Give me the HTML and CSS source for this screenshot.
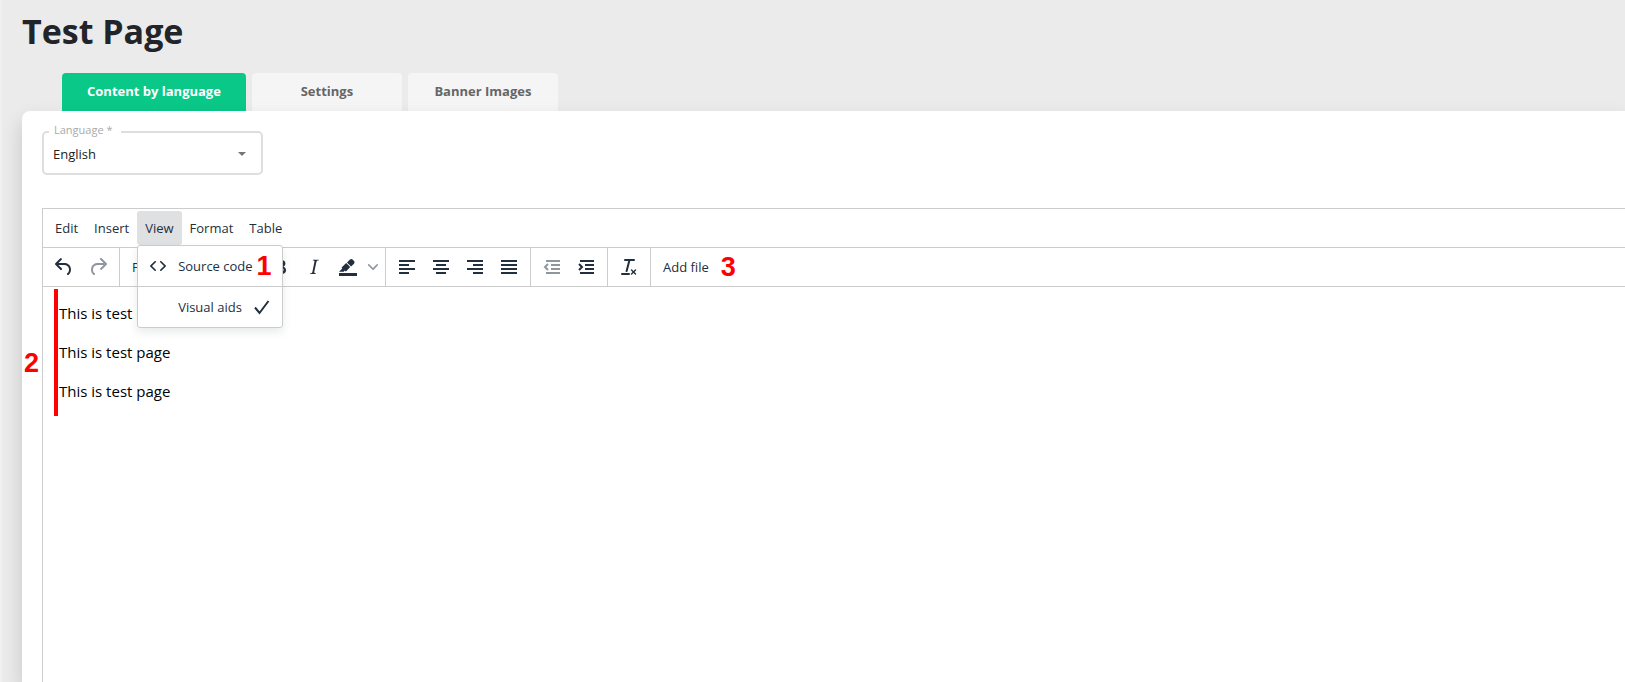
FILE: index.html
```html
<!DOCTYPE html>
<html lang="en">
<head>
    <meta charset="UTF-8">
    <meta name="viewport" content="width=device-width, initial-scale=1.0">
    <title>Test Page</title>
    <link rel="stylesheet" href="styles.css">
</head>
<body>

<h1>Test Page</h1>

<nav class="tabs">
    <button class="tab active">Content by language</button>
    <button class="tab">Settings</button>
    <button class="tab">Banner Images</button>
</nav>

<main class="panel">
    <div class="language-field">
        <label for="language">Language *</label>
        <select id="language">
            <option>English</option>
        </select>
    </div>

    <div class="editor">
        <div class="menubar">
            <button>Edit</button>
            <button>Insert</button>
            <div class="menu-holder">
                <button class="open">View</button>
                <!-- Opened View menu -->
                <div class="menu">
                    <button class="menu-item">
                        <svg viewBox="0 0 24 24"><path d="M9.8 15.7c.3.3.3.8 0 1-.3.4-.9.4-1.2 0l-4.4-4.1a.8.8 0 010-1.2l4.4-4.2c.3-.3.9-.3 1.2 0 .3.3.3.8 0 1.1L6 12l3.8 3.7zM14.2 15.7c-.3.3-.3.8 0 1 .4.4.9.4 1.2 0l4.4-4.1c.3-.3.3-.9 0-1.2l-4.4-4.2a.8.8 0 00-1.2 0c-.3.3-.3.8 0 1.1L18 12l-3.8 3.7z"/></svg>
                        <span>Source code</span>
                        <b class="mark">1</b>
                    </button>
                    <button class="menu-item">
                        <i class="no-icon"></i>
                        <span>Visual aids</span>
                        <svg class="check" viewBox="0 0 24 24"><path d="M5 12.5l4.5 5.5L18.5 6"/></svg>
                    </button>
                </div>
            </div>
            <button>Format</button>
            <button>Table</button>
        </div>

        <div class="toolbar">
            <div class="group">
                <button class="tool" aria-label="Undo"><svg viewBox="0 0 24 24"><path d="M6.4 8H12c3.7 0 6.2 2 6.8 5.1.6 2.7-.4 5.6-2.3 6.8a1 1 0 01-1-1.8c1.1-.6 1.8-2.7 1.4-4.6-.5-2.1-2.1-3.5-4.9-3.5H6.4l3.3 3.3a1 1 0 11-1.4 1.4l-5-5a1 1 0 010-1.4l5-5a1 1 0 011.4 1.4L6.4 8z"/></svg></button>
                <button class="tool" aria-label="Redo" disabled><svg viewBox="0 0 24 24"><path d="M17.6 10H12c-2.8 0-4.4 1.4-4.9 3.5-.4 2 .3 4 1.4 4.6a1 1 0 11-1 1.8c-2-1.2-2.9-4.1-2.3-6.8.6-3 3-5.1 6.8-5.1h5.6l-3.3-3.3a1 1 0 111.4-1.4l5 5a1 1 0 010 1.4l-5 5a1 1 0 01-1.4-1.4l3.3-3.3z"/></svg></button>
            </div>
            <div class="group">
                <button class="format-select">Paragraph</button>
            </div>
            <div class="group">
                <button class="tool" aria-label="Bold"><svg viewBox="0 0 24 24"><path d="M7.8 19c-.3 0-.5 0-.6-.2l-.2-.5V5.7c0-.2 0-.4.2-.5l.6-.2h5c1.5 0 2.7.3 3.5 1 .7.6 1.1 1.4 1.1 2.5a3 3 0 01-.6 1.9c-.4.6-1 1-1.6 1.2.4.1.9.3 1.3.6s.8.7 1 1.2c.4.4.5 1 .5 1.6 0 1.3-.4 2.3-1.3 3-.8.7-2.1 1-3.8 1H7.8zm5-8.3c.6 0 1.2-.1 1.6-.5.4-.3.6-.7.6-1.3 0-1.1-.8-1.7-2.3-1.7H9.3v3.5h3.4zm.5 6c.7 0 1.3-.1 1.7-.4.4-.4.6-.9.6-1.5s-.2-1-.7-1.4c-.4-.3-1-.4-2-.4H9.4v3.8h4z"/></svg></button>
                <button class="tool" aria-label="Italic"><svg viewBox="0 0 24 24"><path d="M16.7 4.7l-.1.9h-.3c-.6 0-1 0-1.4.3-.3.3-.4.6-.5 1.1l-2.1 9.8v.6c0 .5.4.8 1.4.8h.2l-.2.8H8l.2-.8h.2c1.1 0 1.8-.5 2-1.5l2-9.8.1-.5c0-.6-.4-.8-1.4-.8h-.3l.2-.9h5.8z"/></svg></button>
                <button class="tool" aria-label="Background color"><svg viewBox="0 0 24 24"><path d="M3 18h18v3H3zM7.7 16.7H3l3.3-3.3-.7-.8L10.2 8l4 4.1-4 4.2c-.2.2-.6.2-.8 0l-.6-.7-1.1 1.1zm5-7.5L11 7.4l3-2.9a2 2 0 012.6 0L18 6c.7.7.7 2 0 2.7l-2.9 2.9-1.8-1.8-.5-.6"/></svg></button>
                <button class="chevron" aria-label="Pick color"><svg viewBox="0 0 10 10"><path d="M8.7 2.2c.3-.3.8-.3 1 0 .4.4.4.9 0 1.2L5.7 7.8c-.3.3-.9.3-1.2 0L.2 3.4a.8.8 0 010-1.2c.3-.3.8-.3 1.1 0L5 6l3.7-3.8z"/></svg></button>
            </div>
            <div class="group">
                <button class="tool" aria-label="Align left"><svg viewBox="0 0 24 24"><path class="line" d="M4 6h16M4 10h10M4 14h16M4 18h10"/></svg></button>
                <button class="tool" aria-label="Align center"><svg viewBox="0 0 24 24"><path class="line" d="M4 6h16M7 10h10M4 14h16M7 18h10"/></svg></button>
                <button class="tool" aria-label="Align right"><svg viewBox="0 0 24 24"><path class="line" d="M4 6h16M10 10h10M4 14h16M10 18h10"/></svg></button>
                <button class="tool" aria-label="Justify"><svg viewBox="0 0 24 24"><path class="line" d="M4 6h16M4 10h16M4 14h16M4 18h16"/></svg></button>
            </div>
            <div class="group">
                <button class="tool" aria-label="Decrease indent" disabled><svg viewBox="0 0 24 24"><path class="line" d="M6 6h14M11 10h9M11 14h9M6 18h14M8 9l-3 3 3 3"/></svg></button>
                <button class="tool" aria-label="Increase indent"><svg viewBox="0 0 24 24"><path class="line" d="M6 6h14M11 10h9M11 14h9M6 18h14M5 9l3 3-3 3"/></svg></button>
            </div>
            <div class="group">
                <button class="tool" aria-label="Clear formatting"><svg viewBox="0 0 24 24"><path d="M13.2 6a1 1 0 010 .2l-2.6 10a1 1 0 01-1 .8h-.2a.8.8 0 01-.8-1l2.6-10H8a1 1 0 110-2h9a1 1 0 010 2h-3.8zM5 18h7a1 1 0 010 2H5a1 1 0 010-2zm13 1.5L16.5 18 15 19.5a.7.7 0 01-1-1l1.5-1.5-1.5-1.5a.7.7 0 011-1l1.5 1.5 1.5-1.5a.7.7 0 011 1L17.5 17l1.5 1.5a.7.7 0 01-1 1z"/></svg></button>
            </div>
            <div class="group last">
                <button class="add-file">Add file</button>
                <b class="mark">3</b>
            </div>
        </div>

        <div class="page-area">
            <b class="mark side-mark">2</b>
            <div class="page-text" contenteditable="true">
                <p>This is test page</p>
                <p>This is test page</p>
                <p>This is test page</p>
            </div>
        </div>
    </div>
</main>

</body>
</html>
```
FILE: styles.css
```css
* {
    box-sizing: border-box;
}
body {
    display: flex;
    flex-direction: column;
    min-height: 100vh;
    margin: 0;
    padding-left: 20px;
    border-left: 2px solid #f0f0f0;
    background-color: #ebebeb;
    color: #222f3e;
    font-family: "Open Sans", "Noto Sans", sans-serif;
    font-size: 13px;
    overflow: hidden;
}
h1 {
    margin: 0;
    padding-top: 8px;
    color: #212529;
    font-size: 34px;
    font-weight: 700;
    line-height: 46px;
}
button {
    margin: 0;
    padding: 0;
    border: none;
    background: none;
    color: inherit;
    font: inherit;
    cursor: pointer;
}
svg {
    display: block;
    width: 24px;
    height: 24px;
    fill: currentColor;
}
.line {
    fill: none;
    stroke: currentColor;
    stroke-width: 2;
}

/* Tabs */
.tabs {
    display: flex;
    gap: 6px;
    margin: 19px 0 0 40px;
}
.tab {
    min-width: 150px;
    height: 38px;
    padding: 0 25px 2px;
    border-radius: 4px 4px 0 0;
    background-color: #f5f5f5;
    color: #666;
    font-weight: 700;
}
.tab.active {
    background-color: #0ac888;
    color: white;
}

.panel {
    display: flex;
    flex-direction: column;
    flex: 1;
    padding: 20px 0 0 20px;
    border-radius: 8px 0 0 0;
    background-color: white;
    box-shadow: 0 10px 20px rgba(0, 0, 0, 0.16);
}

/* Language drop-down */
.language-field {
    position: relative;
    width: 221px;
}
.language-field label {
    position: absolute;
    top: -8px;
    left: 7px;
    padding: 0 8px 0 5px;
    background-color: white;
    color: #aaa;
    font-size: 11px;
    line-height: 14px;
}
.language-field select {
    display: block;
    width: 100%;
    height: 44px;
    padding: 1px 9px 0;
    border: 2px solid #dedede;
    border-radius: 5px;
    background-color: white;
    color: #222;
    font: inherit;
    appearance: none;
}
.language-field::after {
    content: "";
    position: absolute;
    top: 21px;
    right: 17px;
    border: 4px solid transparent;
    border-top-color: #757575;
    border-bottom: none;
}

/* Editor */
.editor {
    display: flex;
    flex-direction: column;
    flex: 1;
    margin-top: 33px;
    border-top: 1px solid #ccc;
    border-left: 1px solid #ccc;
}
.menubar {
    display: flex;
    height: 39px;
    padding: 2px 4px;
    border-bottom: 1px solid #ccc;
}
.menubar > button, .open {
    height: 34px;
    padding: 0 8px;
    border-radius: 3px;
}
.open {
    background-color: #dee0e2;
}
.menu-holder {
    position: relative;
}
.menu {
    position: absolute;
    top: 34px;
    left: 0;
    z-index: 1;
    width: 146px;
    border: 1px solid #ccc;
    border-radius: 3px;
    background-color: white;
    box-shadow: 0 4px 8px rgba(34, 47, 62, 0.1);
}
.menu-item {
    display: flex;
    align-items: center;
    width: 100%;
    height: 40px;
    padding-left: 8px;
    white-space: nowrap;
}
.menu-item + .menu-item {
    height: 41px;
    border-top: 1px solid #ccc;
}
.menu-item span {
    margin: 0 4px 0 8px;
}
.no-icon {
    width: 24px;
}
.check {
    margin-left: 4px;
    fill: none;
    stroke: currentColor;
    stroke-width: 2;
}
.toolbar {
    display: flex;
    height: 39px;
    border-bottom: 1px solid #ccc;
}
.group {
    display: flex;
    align-items: center;
    padding: 0 4px;
    border-right: 1px solid #ccc;
}
.last {
    border-right: none;
}
.tool {
    display: flex;
    align-items: center;
    justify-content: center;
    width: 34px;
    height: 34px;
}
.tool:disabled {
    color: #9096a0;
}
.format-select {
    width: 130px;
    padding-left: 8px;
    text-align: left;
}
.chevron {
    width: 16px;
    color: #9096a0;
}
.chevron svg {
    width: 10px;
    height: 10px;
    margin: 0 auto;
}
.add-file {
    padding: 0 12px 0 8px;
}

/* Red markers */
.mark {
    color: red;
    font-family: "Liberation Sans", Arial, sans-serif;
    font-size: 27px;
    font-weight: 700;
    line-height: 32px;
}
.side-mark {
    position: absolute;
    top: 60px;
    left: -19px;
}

/* Edited page */
.page-area {
    position: relative;
    padding: 2px 0 0 11px;
}
.page-text {
    padding: 13px 0 13px 1px;
    border-left: 4px solid red;
    color: black;
    font-size: 15px;
    line-height: 23px;
    outline: none;
}
.page-text p {
    margin: 0 0 16px;
}
.page-text p:last-child {
    margin-bottom: 0;
}
```
